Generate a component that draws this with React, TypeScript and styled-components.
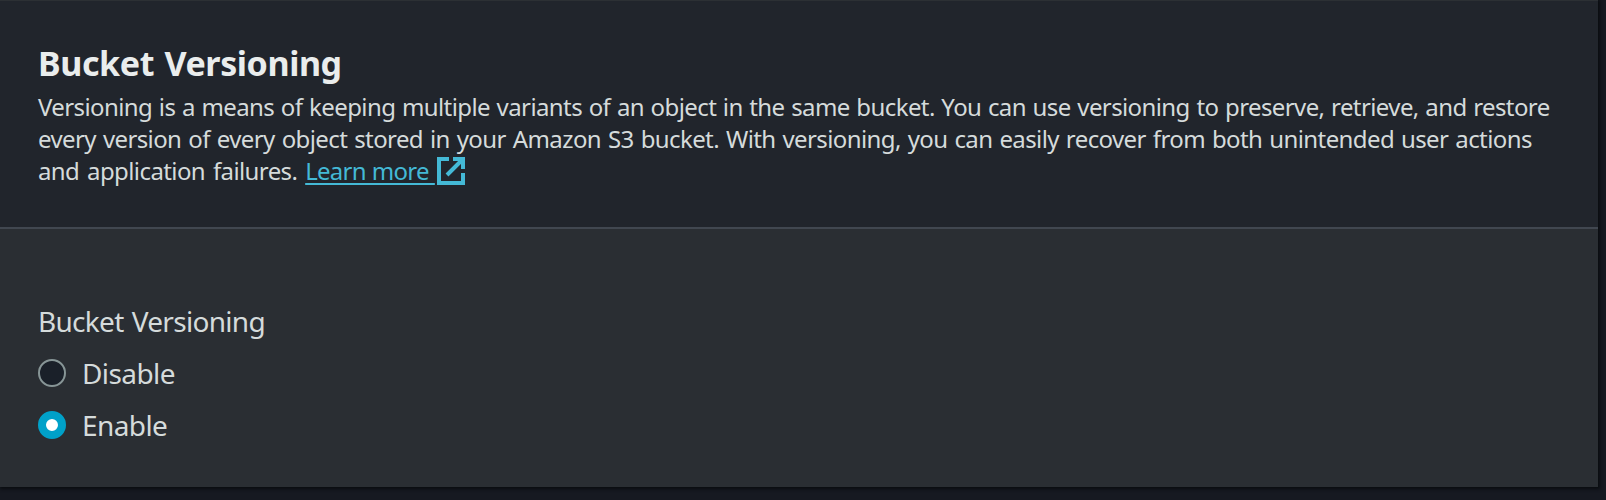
import React from 'react';
import styled, { createGlobalStyle } from 'styled-components';

const Global = createGlobalStyle`
  * { box-sizing: border-box; }
  body { margin: 0; background: #161921; font-family: "Noto Sans", sans-serif; color: #d5dbdb; overflow: hidden; }
`;
const Page = styled.main`
  height: 500px;
  padding-right: 8px;
  background: #161921;
`;
const Card = styled.section`
  height: 487px;
  background: #2a2e33;
  border-top: 1px solid #2c3034;
  box-shadow: 1px 1px 3px 1px #0a0c10;
`;
const Header = styled.header`
  height: 228px;
  padding: 37px 38px 0;
  background: #21252c;
  border-bottom: 2px solid #414750;
`;
const Title = styled.h2`
  margin: 0;
  font-size: 34px;
  line-height: 50px;
  font-weight: 700;
  letter-spacing: -0.4px;
  word-spacing: 2px;
  color: #eaeded;
`;
const Description = styled.p`
  margin: 3px 0 0;
  font-size: 24px;
  line-height: 32px;
`;
const Line = styled.span<{ $word: number }>`
  display: block;
  height: 32px;
  white-space: nowrap;
  letter-spacing: -0.6px;
  word-spacing: ${(p) => p.$word}px;
`;
const Link = styled.a`
  color: #44b9d6;
  text-decoration: underline;
  text-decoration-thickness: 2px;
  text-underline-offset: 3px;
  text-decoration-skip-ink: none;
  letter-spacing: -0.75px;
  word-spacing: 0.6px;
  white-space: pre;
`;
const Icon = styled.svg`
  width: 28px;
  height: 28px;
  margin-left: 2px;
  vertical-align: -5px;
`;
const Fields = styled.div`
  padding: 74px 38px 0;
`;
const Label = styled.div`
  margin-bottom: 8px;
  font-size: 28px;
  line-height: 36px;
  letter-spacing: -0.7px;
  word-spacing: 1.5px;
`;
const Option = styled.label`
  display: flex;
  align-items: center;
  gap: 16px;
  height: 52px;
  font-size: 28px;
  letter-spacing: -0.6px;
`;
const Radio = styled.span<{ $on?: boolean }>`
  width: 28px;
  height: 28px;
  border-radius: 50%;
  border: ${(p) => (p.$on ? '8px solid #00a1c9' : '2px solid #879596')};
  background: ${(p) => (p.$on ? '#fff' : '#1a2029')};
`;

export default function App() {
  return (
    <Page>
      <Global />
      <Card>
        <Header>
          <Title>Bucket Versioning</Title>
          <Description>
            <Line $word={1}>Versioning is a means of keeping multiple variants of an object in the same bucket. You can use versioning to preserve, retrieve, and restore</Line>
            <Line $word={1.3}>every version of every object stored in your Amazon S3 bucket. With versioning, you can easily recover from both unintended user actions</Line>
            <Line $word={2.2}>
              and application failures. <Link>Learn more </Link>
              <Icon viewBox="0 0 28 28" fill="none" stroke="#44b9d6" strokeWidth="4">
                <path d="M12 2H2V26H26V16M16 2H26V12M26 2L10 18" />
              </Icon>
            </Line>
          </Description>
        </Header>
        <Fields>
          <Label>Bucket Versioning</Label>
          <Option><Radio />Disable</Option>
          <Option><Radio $on />Enable</Option>
        </Fields>
      </Card>
    </Page>
  );
}
